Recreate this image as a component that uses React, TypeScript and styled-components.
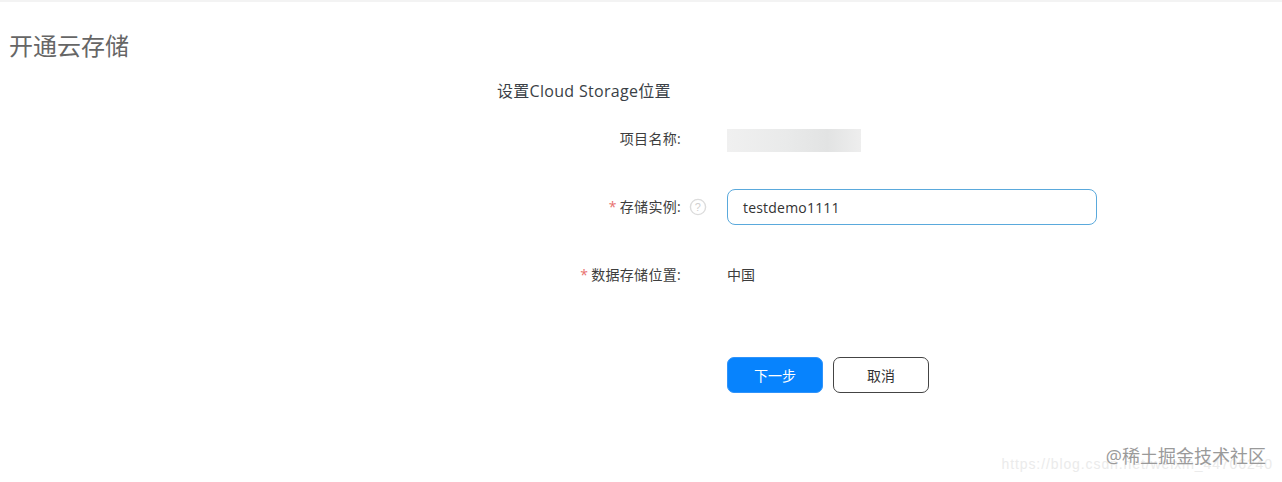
import React from "react";
import styled, { createGlobalStyle } from "styled-components";

const GlobalStyle = createGlobalStyle`
    html, body {
        margin: 0;
        padding: 0;
        background: #fff;
        overflow: hidden;
    }
    body {
        font-family: "Open Sans", "Noto Sans CJK SC", sans-serif;
    }
`;

const Page = styled.div`
    position: relative;
    width: 1282px;
    height: 482px;
    background: #fff;
    overflow: hidden;
`;

const TopBar = styled.div`
    height: 2px;
    background: #f3f3f3;
`;

const Title = styled.h1`
    margin: 0;
    padding: 29px 0 0 9px;
    height: 34px;
    font-size: 24px;
    line-height: 30px;
    font-weight: 400;
    color: #666;
`;

const SubTitle = styled.h2`
    margin: 0;
    padding: 14px 0 0 497px;
    height: 28px;
    font-size: 16px;
    line-height: 24px;
    font-weight: 400;
    letter-spacing: 0.3px;
    color: #3a3f46;
`;

const Form = styled.form`
    display: flex;
    flex-direction: column;
`;

const Row = styled.div<{ $height: number }>`
    display: grid;
    grid-template-columns: 681px 370px;
    column-gap: 46px;
    align-items: center;
    height: ${(props) => props.$height}px;
`;

const Label = styled.label`
    display: flex;
    justify-content: flex-end;
    align-items: center;
    padding-bottom: 2px;
    font-size: 14px;
    letter-spacing: 0.3px;
    color: #3d3d3d;
`;

const Star = styled.span`
    margin-right: 3px;
    color: #e8706f;
`;

const Help = styled.svg`
    position: absolute;
    left: 689px;
    margin-top: 2px;
`;

const Blurred = styled.div`
    margin-top: 4px;
    width: 134px;
    height: 23px;
    background: linear-gradient(90deg, #f0f0f0 0%, #e9eaea 45%, #e2e3e3 75%, #eeeeee 100%);
`;

const Input = styled.div`
    box-sizing: border-box;
    height: 36px;
    padding: 0 15px;
    display: flex;
    align-items: center;
    border: 1px solid #5aa9dc;
    border-radius: 8px;
    font-size: 14px;
    letter-spacing: 0.2px;
    color: #333;
`;

const Value = styled.span`
    padding-bottom: 2px;
    font-size: 14px;
    color: #3d3d3d;
`;

const Actions = styled.div`
    display: flex;
    gap: 10px;
    padding: 51px 0 0 727px;
`;

const Button = styled.button<{ $primary?: boolean }>`
    box-sizing: border-box;
    width: 96px;
    height: 36px;
    padding: 0;
    border-radius: 7px;
    border: 1px solid ${(props) => (props.$primary ? "#2f93fb" : "#444")};
    background: ${(props) => (props.$primary ? "#0783fd" : "#fff")};
    color: ${(props) => (props.$primary ? "#fff" : "#333")};
    font-family: inherit;
    font-size: 14px;
`;

const Watermark = styled.div`
    position: absolute;
    right: 9px;
    bottom: 10px;
    width: 270px;
    height: 32px;
`;

const WatermarkBack = styled.span`
    position: absolute;
    right: 0;
    bottom: 0;
    font-family: "Liberation Sans", sans-serif;
    font-size: 14px;
    line-height: 16px;
    letter-spacing: 0.9px;
    white-space: nowrap;
    color: #ebebeb;
`;

const WatermarkFront = styled.span`
    position: absolute;
    right: 7px;
    top: 5px;
    font-size: 18px;
    line-height: 22px;
    white-space: nowrap;
    color: #9a9a9a;
`;

const App = () => {
    return (
        <Page>
            <GlobalStyle />
            <TopBar />
            <Title>开通云存储</Title>
            <SubTitle>设置Cloud Storage位置</SubTitle>
            <Form>
                <Row $height={63}>
                    <Label>项目名称:</Label>
                    <Blurred />
                </Row>
                <Row $height={74}>
                    <Label>
                        <Star>*</Star>存储实例:
                        <Help width="18" height="18" viewBox="0 0 18 18">
                            <circle cx="9" cy="9" r="7.6" fill="none" stroke="#dcdcdc" strokeWidth="1.4" />
                            <text x="9" y="13" textAnchor="middle" fontSize="11" fill="#cfcfcf" fontFamily="Liberation Sans">?</text>
                        </Help>
                    </Label>
                    <Input>testdemo1111</Input>
                </Row>
                <Row $height={62}>
                    <Label>
                        <Star>*</Star>数据存储位置:
                    </Label>
                    <Value>中国</Value>
                </Row>
            </Form>
            <Actions>
                <Button type="button" $primary>下一步</Button>
                <Button type="button">取消</Button>
            </Actions>
            <Watermark>
                <WatermarkBack>https://blog.csdn.net/weixin_44706240</WatermarkBack>
                <WatermarkFront>@稀土掘金技术社区</WatermarkFront>
            </Watermark>
        </Page>
    );
};

export default App;
